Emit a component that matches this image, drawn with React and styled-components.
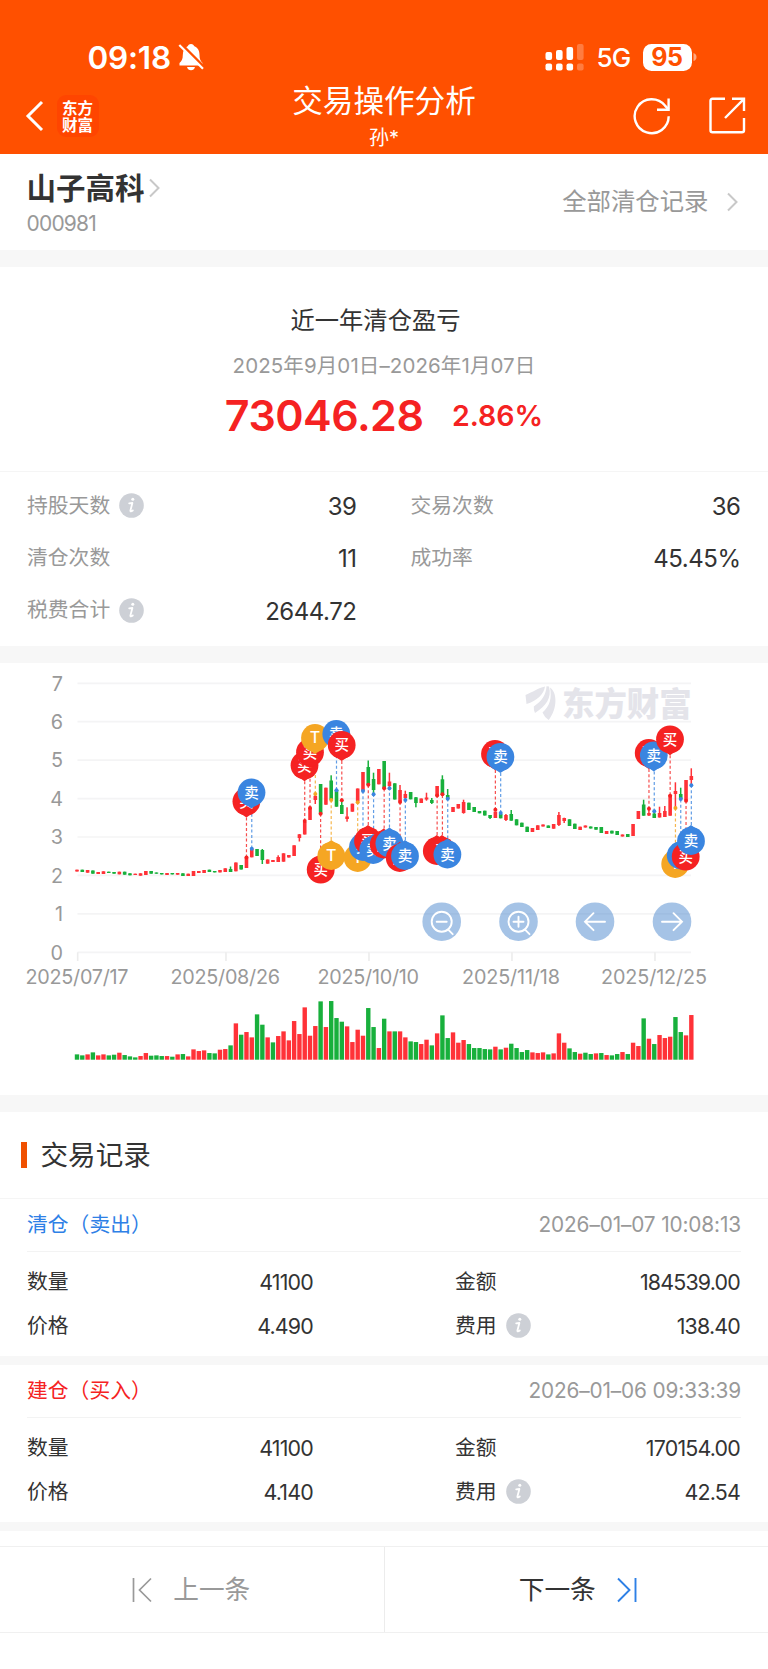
import React from "react";
import styled, { createGlobalStyle } from "styled-components";

const GlobalStyle = createGlobalStyle`
  * {
    box-sizing: border-box;
  }
  body {
    margin: 0;
    background: #fff;
    color: #333;
    font-family: Inter, "Noto Sans CJK SC", sans-serif;
  }
`;

const Page = styled.div`
  width: 768px;
  height: 1669px;
  overflow: hidden;
  background: #fff;
`;

const Header = styled.header`
  height: 153.5px;
  background: #ff5000;
  color: #fff;
`;

const StatusBar = styled.div`
  display: flex;
  align-items: center;
  justify-content: space-between;
  height: 78px;
  padding: 36px 71.5px 0 87.5px;
`;

const StatusGroup = styled.div`
  display: flex;
  align-items: center;
`;

const Clock = styled.span`
  width: 90px;
  font-size: 31.5px;
  font-weight: 600;
  letter-spacing: -0.2px;
  white-space: nowrap;
`;

const Network = styled.span`
  width: 46px;
  margin-left: 13px;
  font-size: 26px;
  font-weight: 500;
  letter-spacing: -0.8px;
`;

const Battery = styled.span`
  display: flex;
  align-items: center;
  justify-content: center;
  width: 49px;
  height: 27px;
  border-radius: 8.5px;
  background: #fff;
  color: #ff5000;
  font-size: 25px;
  font-weight: 700;
  letter-spacing: -0.4px;
`;

const NavBar = styled.div`
  display: grid;
  grid-template-columns: 1fr auto 1fr;
  height: 75px;
`;

const NavSide = styled.div`
  display: flex;
  align-items: center;
  height: 75px;
  justify-content: ${({ $end }) => ($end ? "flex-end" : "flex-start")};
  gap: ${({ $end }) => ($end ? "38px" : "12.5px")};
  padding: ${({ $end }) => ($end ? "0 22px 0 0" : "0 0 0 25px")};
`;

const AppBadge = styled.div`
  width: 42px;
  height: 42px;
  padding-top: 4px;
  border-radius: 9px;
  background: #ff4500;
  font-family: "Noto Sans CJK SC", sans-serif;
  font-size: 15.5px;
  font-weight: 700;
  line-height: 17px;
  text-align: center;
`;

const TitleBox = styled.div`
  text-align: center;
`;

const Title = styled.h1`
  margin: 0;
  padding-top: 2px;
  font-size: 30.6px;
  font-weight: 400;
  line-height: 42px;
`;

const SubTitle = styled.div`
  padding-top: 2px;
  font-size: 20px;
  line-height: 28px;
`;

const Gap = styled.div`
  height: ${({ $h }) => $h || 17}px;
  background: #f7f7f7;
`;

const StockBar = styled.div`
  display: flex;
  justify-content: space-between;
  height: 96.5px;
  padding: 14px 29.5px 0 26.5px;
`;

const StockName = styled.div`
  display: flex;
  align-items: center;
  gap: 4px;
  height: 40px;
  font-size: 29.5px;
  font-weight: 600;
  line-height: 36px;
`;

const StockCode = styled.div`
  padding-top: 1px;
  color: #999;
  font-size: 21px;
  line-height: 30px;
  letter-spacing: -0.8px;
`;

const AllRecords = styled.div`
  display: flex;
  align-items: center;
  gap: 18px;
  height: 68px;
  color: #999;
  font-size: 24.4px;
  line-height: 36px;

  span {
    padding-bottom: 1px;
  }
`;

const Summary = styled.section`
  height: 204.5px;
  padding-top: 35px;
  border-bottom: 1.5px solid #f5f5f5;
  text-align: center;
`;

const SummaryTitle = styled.div`
  padding-right: 17px;
  font-size: 24.3px;
  line-height: 36px;
`;

const SummaryDate = styled.div`
  padding-top: 12px;
  color: #999;
  font-size: 20.5px;
  line-height: 32px;
  letter-spacing: 0.1px;
`;

const Profit = styled.div`
  display: flex;
  align-items: baseline;
  justify-content: center;
  gap: 28.5px;
  height: 60px;
  color: #f52222;
  font-size: 43px;
  font-weight: 600;
  line-height: 67px;
  letter-spacing: -0.5px;
`;

const Percent = styled.span`
  position: relative;
  top: -5px;
  font-size: 28.5px;
  letter-spacing: 0;
`;

const Stats = styled.section`
  display: grid;
  grid-template-columns: 329.5px 330px;
  column-gap: 54px;
  grid-auto-rows: 52.4px;
  height: 174.5px;
  padding: 8px 27px 0;
`;

const Stat = styled.div`
  display: flex;
  align-items: center;
  justify-content: space-between;
`;

const StatLabel = styled.span`
  display: flex;
  align-items: center;
  gap: 9px;
  color: ${({ $dark }) => ($dark ? "#333" : "#999")};
  font-size: 20.8px;
  line-height: 30px;
`;

const StatValue = styled.span`
  padding-top: ${({ $small }) => ($small ? 0 : 1.5)}px;
  font-size: ${({ $small }) => ($small ? 21.4 : 24)}px;
  letter-spacing: ${({ $small }) => ($small ? -0.8 : -0.45)}px;
`;

const ChartPanel = styled.section`
  height: 432px;

  svg {
    display: block;
  }
`;

const RecordsTitle = styled.h2`
  display: flex;
  align-items: center;
  gap: 14px;
  height: 87px;
  margin: 0;
  padding-left: 21px;
  border-bottom: 1.5px solid #f5f5f5;
  font-size: 27.6px;
  font-weight: 400;
  line-height: 36px;

  &::before {
    content: "";
    width: 5.5px;
    height: 26px;
    background: #f05000;
  }
`;

const Record = styled.article`
  height: 157px;
  padding: 0 27px;
`;

const RecordHead = styled.div`
  display: flex;
  align-items: center;
  justify-content: space-between;
  height: 52.5px;
  border-bottom: 1.5px solid #f3f3f3;
  color: ${({ $side }) => ($side === "buy" ? "#f52222" : "#2e80e6")};
  font-size: 20.8px;
  line-height: 30px;
`;

const RecordTime = styled.time`
  color: #999;
  letter-spacing: -0.13px;
`;

const RecordGrid = styled.div`
  display: grid;
  grid-template-columns: 286px 285px;
  column-gap: 142px;
  grid-auto-rows: 43.6px;
  padding-top: 9px;
`;

const Footer = styled.footer`
  display: grid;
  grid-template-columns: 1fr 1fr;
  height: 87px;
  margin-top: 15px;
  border-top: 1.5px solid #f0f0f0;
  border-bottom: 1.5px solid #f0f0f0;
`;

const PageButton = styled.button`
  display: flex;
  align-items: center;
  justify-content: center;
  gap: 21px;
  padding: 0 1.5px 0 ${({ $pad }) => $pad || 0}px;
  border: 0;
  border-left: ${({ $divided }) => ($divided ? "1.5px solid #ececec" : "0")};
  background: none;
  color: ${({ $muted }) => ($muted ? "#999" : "#333")};
  font-family: inherit;
  font-size: 25.7px;
  line-height: 36px;
`;

const RED = "#ff3238";
const GREEN = "#18b03c";
const PIN = { buy: "#f52222", sell: "#3a85e0", t: "#f5a623" };
const PIN_TEXT = { buy: "买", sell: "卖", t: "T" };

const FIRST_X = 77;
const STEP = 5.296;
const VOLUME_BASE = 1059.7;
const xOf = (i) => FIRST_X + i * STEP;

// one letter per day in tens, r = up, g = down
const volumeSides = [
  "ggrgrrggrg",
  "ggrrgggrgr",
  "grrrrggrrg",
  "rgrrggrgrr",
  "rrrrrrgrgg",
  "grrrrggrgr",
  "grrggrrgrg",
  "grrrgggggr",
  "grggggrrrg",
  "rrrggrggrg",
  "rggrgrrgrg",
  "rrrggrr",
].join("");
const volumes = [
  16, 13, 16, 22, 13, 16, 13, 15, 21, 14, 10, 7, 11, 20, 12, 13, 11, 11, 9, 16,
  17, 10, 31, 26, 28, 20, 19, 30, 32, 43, 109, 75, 83, 67, 136, 105, 67, 52, 71,
  85, 58, 116, 77, 157, 72, 101, 175, 98, 176, 125, 114, 100, 53, 90, 72, 155,
  98, 35, 123, 85, 85, 85, 67, 55, 53, 47, 60, 43, 79, 133, 65, 82, 51, 59, 47,
  35, 35, 32, 31, 39, 31, 36, 48, 35, 23, 29, 22, 20, 22, 16, 19, 79, 51, 34,
  23, 18, 21, 17, 19, 20, 14, 13, 17, 23, 17, 51, 41, 124, 63, 47, 74, 65, 69,
  128, 83, 73, 134,
];

// side, body top, body bottom, then high and low where the wick is longer
const candles = [
  ["r", 869.7, 871.5], ["g", 869.7, 872], ["r", 870, 872.7], ["g", 870.5, 873.7],
  ["r", 872, 874], ["r", 871.3, 874], ["g", 871.7, 873], ["g", 872, 873.7],
  ["r", 871.7, 874.3], ["g", 871.7, 874.7], ["g", 873.3, 875.3], ["r", 873.7, 875],
  ["r", 873.3, 875.7], ["r", 871, 875], ["g", 871, 873.7], ["g", 872.5, 873.7],
  ["g", 873, 874.4], ["r", 873, 875], ["g", 873, 874.4], ["r", 873, 874.7],
  ["g", 873.3, 876], ["r", 873.7, 876], ["r", 871, 876], ["r", 871, 873],
  ["r", 870, 873], ["g", 869.7, 872], ["g", 871, 872.4], ["r", 870, 872.4],
  ["r", 868.3, 872], ["g", 869, 872, 866.5, 872], ["r", 862.5, 871.3], ["g", 865, 869.5],
  ["r", 857.5, 868], ["r", 848.7, 857.3], ["g", 849, 856], ["g", 850, 860, 849, 864],
  ["r", 859.5, 863.7], ["r", 860, 862], ["r", 857, 862, 855.3, 862], ["r", 853.3, 861.7],
  ["r", 855, 857.5], ["r", 845.3, 856], ["r", 834.3, 838, 834, 841.5], ["r", 822, 834.5],
  ["r", 808, 820], ["r", 796, 800, 794, 804], ["g", 784, 813.7], ["r", 787.7, 804.7],
  ["g", 780.5, 800, 775.3, 800], ["g", 790, 806.7], ["g", 805, 814, 801, 814],
  ["r", 816.5, 819, 807.3, 821.7], ["r", 803.7, 811.7], ["r", 788.5, 801.5],
  ["r", 772, 791], ["g", 767, 785, 760.5, 785], ["g", 779, 790, 772.7, 794],
  ["r", 769, 784.3], ["g", 761, 788.3], ["r", 781.5, 786, 772.7, 788],
  ["g", 783.3, 799.5], ["r", 790, 801.5, 785, 801.5], ["r", 794, 798, 790.7, 800],
  ["g", 792, 799.3], ["g", 797.3, 803, 797, 807.3], ["r", 798.5, 803],
  ["r", 797.5, 799.5, 792.7, 800.7], ["g", 800, 803, 798, 804], ["r", 786, 796],
  ["g", 779.3, 795, 775.3, 795], ["g", 795, 799, 789, 799], ["r", 807, 812],
  ["r", 804, 808.5], ["r", 802, 813, 799.7, 813.7], ["g", 802.7, 810], ["g", 807, 812],
  ["g", 811, 813.3], ["g", 810.7, 815.5], ["g", 815, 818, 815, 819], ["r", 811.7, 818],
  ["g", 814, 818.3], ["r", 815, 820, 814, 821], ["g", 814, 820.7, 810, 820.7],
  ["g", 819.3, 825.3], ["g", 822.7, 827], ["g", 826.7, 832], ["r", 828, 832],
  ["r", 825.3, 830], ["r", 824.5, 826.5], ["g", 825.5, 828], ["r", 824, 828.7],
  ["r", 815, 825, 812, 826], ["r", 818, 821, 817.7, 823], ["g", 819.3, 826],
  ["g", 823.7, 829], ["r", 826.7, 830], ["r", 825.5, 827.5], ["g", 826.5, 828.5],
  ["g", 827, 829.7], ["g", 827, 833], ["r", 831, 834], ["g", 830.7, 833.5],
  ["g", 831, 835], ["r", 834.5, 836.5], ["g", 834, 837], ["r", 824, 836],
  ["r", 811, 819], ["g", 804.5, 815.7, 799.7, 815.7], ["r", 813, 815.5, 808, 816],
  ["g", 813.5, 818, 811, 818], ["r", 813, 817.5, 806.7, 817.5], ["r", 811, 817, 806, 817],
  ["r", 795, 815.7], ["r", 791, 794, 782.3, 808], ["g", 794, 799, 787.7, 799],
  ["r", 780, 800], ["r", 776, 780, 768.3, 785.3],
];

// kind, pin x, pin y, day index, traded price on the y axis, tip direction
const pins = [
  ["buy", 246.4, 801.5, 32, 857.5, "down"],
  ["sell", 251.5, 792.5, 33, 848.7, "down"],
  ["buy", 304.5, 765.3, 43, 821, "down"],
  ["buy", 310, 752.3, 44, 808, "down"],
  ["t", 315, 738, 45, 794, "down"],
  ["buy", 320.7, 869.7, 46, 813.7, "up"],
  ["t", 331.3, 856, 48, 800, "up"],
  ["sell", 336.3, 734, 49, 790.3, "down"],
  ["buy", 341.7, 745, 50, 800.3, "down"],
  ["t", 357.7, 858, 53, 802.3, "up"],
  ["sell", 363, 847, 54, 791, "up"],
  ["buy", 368, 841, 55, 784.7, "up"],
  ["sell", 373.2, 850, 56, 794.3, "up"],
  ["buy", 383.7, 844.5, 58, 788.3, "up"],
  ["sell", 389.4, 843.5, 59, 788.3, "up"],
  ["buy", 399.8, 858, 61, 802, "up"],
  ["sell", 405, 856, 62, 800, "up"],
  ["buy", 436.8, 851, 68, 795.5, "up"],
  ["buy", 442, 851, 69, 794.3, "up"],
  ["sell", 447.4, 854.5, 70, 798.7, "up"],
  ["buy", 495, 754, 79, 809.7, "down"],
  ["sell", 500.4, 757, 80, 813, "down"],
  ["buy", 648.7, 753, 108, 808.7, "down"],
  ["sell", 653.8, 755.5, 109, 811.3, "down"],
  ["buy", 670, 739.3, 112, 795.7, "down"],
  ["t", 675.2, 864, 113, 808, "up"],
  ["sell", 680.7, 855.5, 114, 799, "up"],
  ["buy", 685.7, 856.7, 115, 800.7, "up"],
  ["sell", 691, 841, 116, 785.3, "up"],
];

const priceTicks = [7, 6, 5, 4, 3, 2, 1, 0];
const dateTicks = [
  [77.7, "2025/07/17", 25.5, 103],
  [226, "2025/08/26", 170.5, 109.5],
  [369, "2025/10/10", 317.5, 101.5],
  [512, "2025/11/18", 462, 98],
  [655, "2025/12/25", 601, 106],
];
const priceY = (value) => 952.3 - value * 38.43;

const records = [
  {
    side: "sell",
    name: "清仓（卖出）",
    time: "2026–01–07 10:08:13",
    count: "41100",
    amount: "184539.00",
    price: "4.490",
    fee: "138.40",
  },
  {
    side: "buy",
    name: "建仓（买入）",
    time: "2026–01–06 09:33:39",
    count: "41100",
    amount: "170154.00",
    price: "4.140",
    fee: "42.54",
  },
];

function InfoIcon() {
  return (
    <svg width="25" height="25" viewBox="0 0 25 25">
      <circle cx="12.5" cy="12.5" r="12.3" fill="#cdd0d6" />
      <circle cx="13.8" cy="6.3" r="1.5" fill="#fff" />
      <path
        d="M10.2 10.4 L13.4 10 L11.4 17.6 Q11.3 19.2 13.8 17.4"
        fill="none"
        stroke="#fff"
        strokeWidth="1.8"
        strokeLinejoin="round"
        strokeLinecap="round"
      />
    </svg>
  );
}

function Chevron() {
  return (
    <svg width="12" height="20" viewBox="0 0 12 20">
      <path d="M1 1.5 L9.5 10 L1 18.5" fill="none" stroke="#c8c8c8" strokeWidth="2" />
    </svg>
  );
}

function BellOff() {
  return (
    <svg width="26" height="28" viewBox="0 0 26 28">
      <path
        d="M13 1 C15 1 15.8 2 16 3 C20 4.5 21.5 8 21.5 12 C21.5 16 22.5 18 24.5 20 V22.5 H1.5 V20 C3.8 18 4.8 16 4.8 12 C4.8 8 6.5 4.5 10 3 C10.2 2 11 1 13 1 Z"
        fill="#fff"
      />
      <path d="M9 24 H17 Q16 27.2 13 27.2 Q10 27.2 9 24 Z" fill="#fff" />
      <path d="M2.5 0.5 L26 24" stroke="#ff5000" strokeWidth="3" />
      <path d="M1.3 2 L25 25.7" stroke="#fff" strokeWidth="2.2" />
    </svg>
  );
}

function Signal() {
  return (
    <svg width="39" height="28" viewBox="0 0 39 28" fill="#fff">
      <rect x="0.5" y="9" width="6.6" height="8" rx="2" />
      <rect x="11" y="7" width="6.6" height="10" rx="2" />
      <rect x="21.5" y="4" width="6.6" height="13" rx="2" />
      <rect x="32" y="1" width="6.6" height="16" rx="2" opacity="0.25" />
      <rect x="0.5" y="20.5" width="6.6" height="7" rx="2" />
      <rect x="11" y="20.5" width="6.6" height="7" rx="2" />
      <rect x="21.5" y="20.5" width="6.6" height="7" rx="2" />
      <rect x="32" y="20.5" width="6.6" height="7" rx="2" opacity="0.25" />
    </svg>
  );
}

function Pin({ kind, x, y, tip }) {
  const d = tip === "down" ? 1 : -1;
  return (
    <g fill={PIN[kind]}>
      <circle cx={x} cy={y} r="13.9" />
      <path
        d={`M${x - 9} ${y + 10.4 * d} Q${x - 3} ${y + 13.5 * d} ${x} ${y + 16 * d} Q${x + 3} ${y + 13.5 * d} ${x + 9} ${y + 10.4 * d} Z`}
      />
      <text
        x={x}
        y={y + 5.3}
        fill="#fff"
        fontSize={kind === "t" ? 16 : 14.5}
        fontWeight="500"
        textAnchor="middle"
      >
        {PIN_TEXT[kind]}
      </text>
    </g>
  );
}

function ChartButton({ x, children }) {
  return (
    <g transform={`translate(${x} 921.7)`}>
      <circle r="19.3" fill="#3a7cc8" opacity="0.46" />
      <g fill="none" stroke="#fff" strokeWidth="1.9" strokeLinecap="round">
        {children}
      </g>
    </g>
  );
}

function Watermark() {
  return (
    <g fill="#e4e4ea">
      <path d="M525.5 695 C533 692 538 688 545 686.5 C544 694 537 701 526.5 704 Z" />
      <path d="M546.5 686.3 L549 686.5 C552 698 546 706 535 713 Q533.5 710 533.8 706.5 C542 701 546 695 546.5 686.3 Z" />
      <path d="M550 687.5 C557 692 558 708 548.7 720 Q544.5 717.5 542.5 712.5 C550 706 552 698 550 687.5 Z" />
      <text x="562" y="715.5" fontSize="32.4" fontWeight="900" fontFamily="Noto Sans CJK SC, sans-serif">
        东方财富
      </text>
    </g>
  );
}

function TradeChart() {
  return (
    <svg width="768" height="432" viewBox="0 663 768 432">
      {priceTicks.map((value) => (
        <g key={value}>
          <path d={`M77.5 ${priceY(value)} H691`} stroke="#f4f4f5" strokeWidth="1.7" />
          <text x="63" y={priceY(value) + 7.3} fill="#999" fontSize="19.8" textAnchor="end">
            {value}
          </text>
        </g>
      ))}
      {dateTicks.map(([x, label, left, width]) => (
        <g key={label}>
          <path d={`M${x} 952.3 V961`} stroke="#ececec" strokeWidth="1.6" />
          <text x={left} y="983.5" fill="#999" fontSize="19.8" textLength={width}>
            {label}
          </text>
        </g>
      ))}

      <Watermark />

      {candles.map(([side, top, bottom, high = top, low = bottom], i) => (
        <g key={i} fill={side === "r" ? RED : GREEN}>
          <rect x={xOf(i) - 1.8} y={top} width="3.6" height={bottom - top} />
          <rect x={xOf(i) - 0.8} y={high} width="1.5" height={low - high} />
        </g>
      ))}

      {pins.map(([kind, x, y, day, price]) => (
        <g key={day} stroke={PIN[kind]} fill={PIN[kind]}>
          <path d={`M${xOf(day)} ${y} V${price}`} strokeWidth="1.2" strokeDasharray="3 2.3" opacity="0.8" />
          <circle cx={xOf(day)} cy={price} r="2" stroke="none" />
        </g>
      ))}
      {pins.map(([kind, x, y, day, price, tip]) => (
        <Pin key={day} kind={kind} x={x} y={y} tip={tip} />
      ))}

      <ChartButton x={441.7}>
        <circle r="10" />
        <path d="M-5 0 H5 M6.5 8 L11 12.5" />
      </ChartButton>
      <ChartButton x={518.5}>
        <circle r="10" />
        <path d="M-5 0 H5 M0 -5 V5 M6.5 8 L11 12.5" />
      </ChartButton>
      <ChartButton x={595}>
        <path d="M10 0 H-10 M-1.5 -8.5 L-10 0 L-1.5 8.5" />
      </ChartButton>
      <ChartButton x={672}>
        <path d="M-10 0 H10 M1.5 -8.5 L10 0 L1.5 8.5" />
      </ChartButton>

      {volumes.map((v, i) => (
        <rect
          key={i}
          x={xOf(i) - 2.2}
          y={VOLUME_BASE - v / 3}
          width="4.4"
          height={v / 3}
          fill={volumeSides[i] === "r" ? RED : GREEN}
        />
      ))}
    </svg>
  );
}

function StatItem({ label, value, info, record }) {
  return (
    <Stat>
      <StatLabel $dark={record}>
        {label}
        {info && <InfoIcon />}
      </StatLabel>
      <StatValue $small={record}>{value}</StatValue>
    </Stat>
  );
}

export default function App() {
  return (
    <Page>
      <GlobalStyle />
      <Header>
        <StatusBar>
          <StatusGroup>
            <Clock>09:18</Clock>
            <BellOff />
          </StatusGroup>
          <StatusGroup>
            <Signal />
            <Network>5G</Network>
            <Battery>95</Battery>
            <svg width="5" height="10" viewBox="0 0 5 10">
              <path d="M1.5 1 Q4.5 2 4.5 5 Q4.5 8 1.5 9 Z" fill="#fff" opacity="0.5" />
            </svg>
          </StatusGroup>
        </StatusBar>
        <NavBar>
          <NavSide>
            <svg width="19" height="32" viewBox="0 0 19 32">
              <path d="M17 2 L3 16 L17 30" fill="none" stroke="#fff" strokeWidth="3" />
            </svg>
            <AppBadge>
              东方
              <br />
              财富
            </AppBadge>
          </NavSide>
          <TitleBox>
            <Title>交易操作分析</Title>
            <SubTitle>孙*</SubTitle>
          </TitleBox>
          <NavSide $end>
            <svg width="38" height="38" viewBox="0 0 38 38" fill="none" stroke="#fff" strokeWidth="2.4">
              <path d="M35.7 19.3 A17 17 0 1 1 32 8.6 L35.6 12.6" />
              <path d="M35.6 1.5 V12.8 H24" />
            </svg>
            <svg width="37" height="37" viewBox="0 0 37 37" fill="none" stroke="#fff" strokeWidth="2.4">
              <path d="M16 1.8 H3.5 Q1.5 1.8 1.5 3.8 V33.2 Q1.5 35.2 3.5 35.2 H33 Q35 35.2 35 33.2 V21" />
              <path d="M23 1.8 H35 V14 M35 1.8 L16 21" />
            </svg>
          </NavSide>
        </NavBar>
      </Header>

      <StockBar>
        <div>
          <StockName>
            山子高科
            <Chevron />
          </StockName>
          <StockCode>000981</StockCode>
        </div>
        <AllRecords>
          <span>全部清仓记录</span>
          <Chevron />
        </AllRecords>
      </StockBar>
      <Gap />

      <Summary>
        <SummaryTitle>近一年清仓盈亏</SummaryTitle>
        <SummaryDate>2025年9月01日–2026年1月07日</SummaryDate>
        <Profit>
          73046.28
          <Percent>2.86%</Percent>
        </Profit>
      </Summary>
      <Stats>
        <StatItem label="持股天数" value="39" info />
        <StatItem label="交易次数" value="36" />
        <StatItem label="清仓次数" value="11" />
        <StatItem label="成功率" value="45.45%" />
        <StatItem label="税费合计" value="2644.72" info />
      </Stats>
      <Gap />

      <ChartPanel>
        <TradeChart />
      </ChartPanel>
      <Gap />

      <RecordsTitle>交易记录</RecordsTitle>
      {records.map((item) => (
        <React.Fragment key={item.time}>
          <Record>
            <RecordHead $side={item.side}>
              {item.name}
              <RecordTime>{item.time}</RecordTime>
            </RecordHead>
            <RecordGrid>
              <StatItem record label="数量" value={item.count} />
              <StatItem record label="金额" value={item.amount} />
              <StatItem record label="价格" value={item.price} />
              <StatItem record label="费用" value={item.fee} info />
            </RecordGrid>
          </Record>
          <Gap $h={9} />
        </React.Fragment>
      ))}

      <Footer>
        <PageButton $muted>
          <svg width="20" height="26" viewBox="0 0 20 26" fill="none" stroke="#999" strokeWidth="1.7">
            <path d="M1.5 1 V25 M19 1.5 L7.5 13 L19 24.5" />
          </svg>
          上一条
        </PageButton>
        <PageButton $divided $pad={4}>
          下一条
          <svg width="20" height="26" viewBox="0 0 20 26" fill="none" stroke="#2e80e6" strokeWidth="1.9">
            <path d="M18.5 1 V25 M1 1.5 L12.5 13 L1 24.5" />
          </svg>
        </PageButton>
      </Footer>
    </Page>
  );
}
